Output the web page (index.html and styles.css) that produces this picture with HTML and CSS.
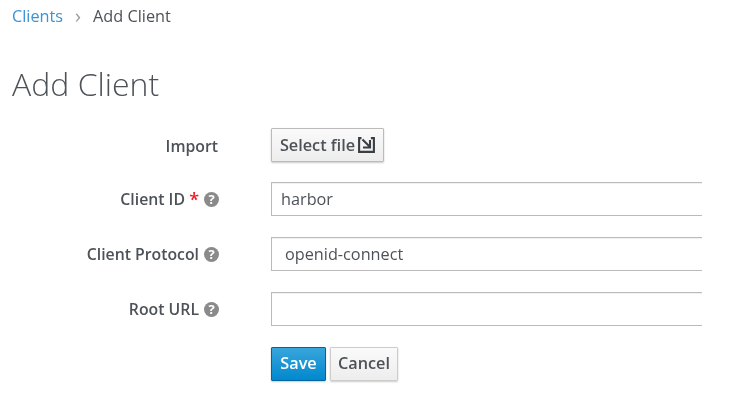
FILE: index.html
```html
<!DOCTYPE html>
<html lang="en">
<head>
<meta charset="utf-8">
<title>Add Client</title>
<link rel="stylesheet" href="styles.css">
</head>
<body>
<div class="page">
  <nav class="crumbs"><a class="crumb-link" href="#">Clients</a><span class="crumb-sep">›</span><span class="crumb-current">Add Client</span></nav>
  <h1 class="title">Add Client</h1>
  <form class="form">
    <div class="row row-file">
      <label class="label">Import</label>
      <button type="button" class="btn btn-file"><span>Select file</span>
        <svg class="file-icon" viewBox="0 0 17 16" width="17" height="16" aria-hidden="true"><path d="M3.5 1.1H1.1v13.8h14.8V1.1h-3" fill="none" stroke="#3a3f44" stroke-width="2.1"/><path d="M4.5 2.5l7 7M12 3v7.5H5" fill="none" stroke="#3a3f44" stroke-width="2.1"/></svg>
      </button>
    </div>
    <div class="row">
      <label class="label">Client ID <span class="req">*</span><span class="help">?</span></label>
      <div class="field">harbor</div>
    </div>
    <div class="row">
      <label class="label">Client Protocol<span class="help">?</span></label>
      <div class="field field-select">openid-connect</div>
    </div>
    <div class="row">
      <label class="label">Root URL<span class="help">?</span></label>
      <div class="field"></div>
    </div>
    <div class="row">
      <span class="label"></span>
      <div class="actions">
        <button type="button" class="btn btn-primary">Save</button>
        <button type="button" class="btn btn-cancel">Cancel</button>
      </div>
    </div>
  </form>
</div>
</body>
</html>
```
FILE: styles.css
```css
* { box-sizing: border-box; }
html, body { margin: 0; background: #fff; }
body { font-family: "Open Sans", "Noto Sans", sans-serif; font-size: 16.25px; color: #363636; }
.page { width: 750px; height: 406px; padding: 5px 0 0 12px; overflow: hidden; filter: blur(0.35px); }
.crumbs { display: flex; align-items: center; height: 22px; line-height: 22px; }
.crumb-link { color: #3b93d6; text-decoration: none; }
.crumb-sep { color: #9c9c9c; font-size: 20px; margin: 0 12px 0 12px; }
.crumb-current { color: #4d5258; }
.title { margin: 36px 0 0; font-size: 32px; line-height: 42px; font-weight: 300; color: #4d5258; }
.form { display: flex; flex-direction: column; gap: 21px; margin-top: 23px; }
.row { display: flex; align-items: center; height: 34px; }
.row-file { margin-bottom: -1px; }
.row-file .label { width: 206px; margin-right: 53px; padding-top: 1px; }
.label { width: 207px; text-align: right; font-size: 15.8px; font-weight: 600; color: #4d5258; margin-right: 52px; display: flex; justify-content: flex-end; align-items: center; white-space: pre; }
.req { color: #ee1c25; font-size: 18px; line-height: 18px; }
.help { display: inline-flex; align-items: center; justify-content: center; width: 15px; height: 15px; margin-left: 5px; border-radius: 50%; background: #8a8a8a; color: #fff; font-size: 13px; font-weight: 700; line-height: 15px; }
.field { width: 431px; height: 34px; border: 1.5px solid #bbb; border-right: 0; padding: 0 9px; line-height: 33px; color: #4d5258; box-shadow: inset 0 1px 1px #f0f0f0; }
.field-select { padding-left: 13px; }
.btn { height: 34px; font-family: inherit; font-size: 16.25px; font-weight: 600; padding: 0 0 2px; border-radius: 1px; cursor: pointer; }
.btn-file { width: 113px; padding: 0; display: flex; align-items: center; justify-content: center; gap: 3px; color: #4d5258; border: 1.5px solid #bbb; background: linear-gradient(#fafafa, #ededed); box-shadow: 0 1px 2px #ccc; }
.file-icon { display: block; }
.actions { display: flex; gap: 4px; }
.btn-primary { width: 55px; color: #fff; border: 1px solid #00659c; background: linear-gradient(#39a5dc, #0088ce); box-shadow: 0 1px 2px #ccc; }
.btn-cancel { width: 68px; color: #4d5258; border: 1.5px solid #ccc; background: linear-gradient(#fafafa, #ededed); box-shadow: 0 1px 2px #ccc; }
```
